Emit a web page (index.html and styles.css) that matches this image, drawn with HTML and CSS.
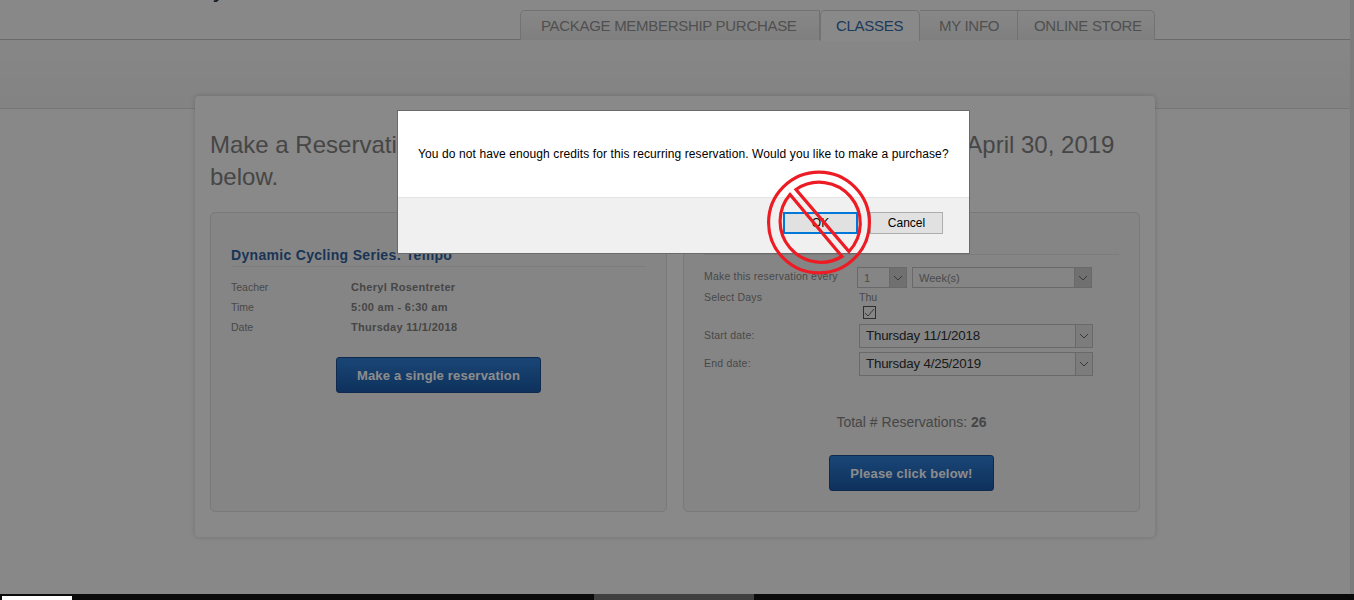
FILE: index.html
```html
<!DOCTYPE html>
<html lang="en">
<head>
  <meta charset="UTF-8" />
  <title>Make a Reservation</title>
  <link rel="stylesheet" href="styles.css">
</head>
<body>
  <div class="page">
    <div class="site-name">My Fitness Studio</div>
    <div class="tabs">
      <a class="tab tab-package">PACKAGE MEMBERSHIP PURCHASE</a>
      <a class="tab tab-classes active">CLASSES</a>
      <a class="tab tab-info">MY INFO</a>
      <a class="tab tab-store">ONLINE STORE</a>
    </div>
    <div class="subbar"></div>

    <div class="card">
      <h1>Make a Reservation for this class, or make a recurring reservation until April 30, 2019 below.</h1>
      <div class="columns">
        <div class="panel panel-single">
          <h2>Dynamic Cycling Series: Tempo</h2>
          <div class="info-row"><span class="info-label">Teacher</span><strong>Cheryl Rosentreter</strong></div>
          <div class="info-row"><span class="info-label">Time</span><strong>5:00 am - 6:30 am</strong></div>
          <div class="info-row"><span class="info-label">Date</span><strong>Thursday 11/1/2018</strong></div>
          <div class="btn-row"><button class="blue-btn single-btn">Make a single reservation</button></div>
        </div>

        <div class="panel panel-recurring">
          <h2>Make a recurring reservation</h2>
          <div class="form-row every-row">
            <span class="form-label">Make this reservation every</span>
            <div class="select small num-select"><span>1</span><i class="arrow"><svg width="10" height="6" viewBox="0 0 10 6"><path d="M1 1l4 4 4-4" /></svg></i></div>
            <div class="select small unit-select"><span>Week(s)</span><i class="arrow"><svg width="10" height="6" viewBox="0 0 10 6"><path d="M1 1l4 4 4-4" /></svg></i></div>
          </div>
          <div class="form-row days-row">
            <span class="form-label">Select Days</span>
            <div class="day">
              <span>Thu</span>
              <div class="check"><svg width="11" height="10" viewBox="0 0 11 10"><path d="M1 5l3 3 6-7" /></svg></div>
            </div>
          </div>
          <div class="form-row date-row">
            <span class="form-label">Start date:</span>
            <div class="select large"><span>Thursday 11/1/2018</span><i class="arrow"><svg width="10" height="6" viewBox="0 0 10 6"><path d="M1 1l4 4 4-4" /></svg></i></div>
          </div>
          <div class="form-row date-row">
            <span class="form-label">End date:</span>
            <div class="select large"><span>Thursday 4/25/2019</span><i class="arrow"><svg width="10" height="6" viewBox="0 0 10 6"><path d="M1 1l4 4 4-4" /></svg></i></div>
          </div>
          <p class="total">Total # Reservations: <strong>26</strong></p>
          <div class="btn-row"><button class="blue-btn click-btn">Please click below!</button></div>
        </div>
      </div>
    </div>
  </div>

  <div class="taskbar">
    <span class="task-white"></span>
    <span class="task-grey"></span>
  </div>

  <div class="overlay"></div>
  <div class="scroll-edge"></div>

  <div class="dialog">
    <div class="dialog-body">You do not have enough credits for this recurring reservation. Would you like to make a purchase?</div>
    <div class="dialog-foot">
      <button class="dlg-btn ok">OK</button>
      <button class="dlg-btn cancel">Cancel</button>
    </div>
  </div>

  <svg class="no-sign" width="106" height="106" viewBox="0 -0.5 106 106">
    <circle cx="53" cy="53" r="50.4" />
    <path d="M30 20 A41 41 0 0 1 83 82 Z" />
    <path d="M24 25 A41 41 0 0 0 76 87 Z" />
  </svg>
</body>
</html>
```

FILE: styles.css
```css
* {
  margin: 0;
  padding: 0;
  box-sizing: border-box;
}

html, body {
  height: 600px;
  overflow: hidden;
}

body {
  font-family: "Liberation Sans", Arial, sans-serif;
  background: #f8f8f8;
  color: #858585;
  position: relative;
}

.page {
  height: 594px;
  overflow: hidden;
}

.site-name {
  height: 0;
  margin-top: -24px;
  margin-left: 193px;
  font-size: 24px;
  line-height: 26px;
  color: #333;
}

.tabs {
  height: 40px;
  margin-top: 24px;
  padding: 10px 0 0 520px;
  display: flex;
  border-bottom: 1px solid #c2c2c2;
}

.tab {
  flex: none;
  height: 30px;
  font-size: 15px;
  letter-spacing: -0.3px;
  line-height: 30px;
  white-space: nowrap;
  color: #929292;
  border: 1px solid #d0d0d0;
  border-bottom: none;
  border-left: none;
  background: linear-gradient(#f6f6f6, #e8e8e8);
}

.tab-package {
  width: 300px;
  padding-left: 20px;
  border-left: 1px solid #d0d0d0;
  border-top-left-radius: 5px;
}

.tab-classes {
  width: 100px;
  padding-left: 15px;
}

.tab-info {
  width: 98px;
  padding-left: 19px;
}

.tab-store {
  width: 137px;
  padding-left: 16px;
  border-top-right-radius: 5px;
}

.tab.active {
  height: 31px;
  color: #336aa8;
  background: #f9f9f9;
  border-left: 1px solid #d0d0d0;
  border-radius: 5px 5px 0 0;
}

.subbar {
  height: 69px;
  background: linear-gradient(#f6f6f6, #eeeeee);
  border-bottom: 1px solid #d8d8d8;
}

.card {
  width: 960px;
  height: 441px;
  margin: -13px 0 0 195px;
  padding: 33px 15px 0;
  background: #f9f9f9;
  border-radius: 4px;
  box-shadow: 0 0 5px rgba(0, 0, 0, 0.18);
  position: relative;
}

h1 {
  font-size: 24px;
  font-weight: normal;
  line-height: 32px;
  color: #808080;
  margin-bottom: 19px;
}

.columns {
  display: flex;
  gap: 16px;
}

.panel {
  width: 457px;
  height: 300px;
  padding: 32px 20px 0;
  background: #f3f3f3;
  border: 1px solid #dcdcdc;
  border-radius: 5px;
}

.panel-recurring {
  padding-top: 20px;
}

h2 {
  font-size: 14px;
  line-height: 20px;
  letter-spacing: 0.31px;
  color: #2f609c;
  border-bottom: 1px solid #e2e2e2;
  padding-bottom: 1px;
  margin-bottom: 10px;
}

.panel-recurring h2 {
  margin-bottom: 12px;
}

.info-row {
  display: flex;
  height: 20px;
  font-size: 10.5px;
  line-height: 20px;
}

.info-label {
  width: 120px;
}

.info-row strong {
  color: #808080;
  font-size: 11px;
  letter-spacing: 0.3px;
}

.btn-row {
  display: flex;
  justify-content: center;
}

.blue-btn {
  font-family: inherit;
  font-size: 13px;
  font-weight: bold;
  letter-spacing: 0.2px;
  color: #fff;
  background: linear-gradient(#2f80d8, #1a5aa8);
  border: 1px solid #1c4c91;
  border-radius: 3px;
  height: 36px;
}

.single-btn {
  width: 205px;
  margin-top: 20px;
}

.click-btn {
  width: 165px;
}

.form-row {
  display: flex;
  font-size: 10.5px;
}

.form-label {
  width: 153px;
  letter-spacing: 0.2px;
}

.every-row {
  height: 23px;
  line-height: 18px;
}

.select {
  display: flex;
  justify-content: space-between;
  align-items: center;
  border: 1px solid #c0c0c0;
  background: #f3f3f3;
}

.select.small {
  height: 21px;
  font-size: 11px;
  color: #888;
  padding-left: 6px;
}

.num-select {
  width: 50px;
  margin-right: 5px;
}

.unit-select {
  width: 180px;
}

.select.large {
  width: 234px;
  height: 24px;
  font-size: 13.33px;
  letter-spacing: -0.2px;
  color: #303030;
  padding-left: 6px;
}

.arrow {
  width: 17px;
  height: 100%;
  display: flex;
  align-items: center;
  justify-content: center;
  background: #cccccc;
  border-left: 1px solid #c0c0c0;
}

.large .arrow {
  background: #e2e2e2;
}

.arrow path, .check path {
  fill: none;
  stroke: #666;
  stroke-width: 1;
}

.days-row {
  height: 34px;
  line-height: 14px;
}

.day {
  width: 18px;
  margin-left: 2px;
  display: flex;
  flex-direction: column;
  gap: 2px;
}

.check {
  width: 13px;
  height: 13px;
  margin-left: 4px;
  flex: none;
  border: 1px solid #555;
  display: flex;
  align-items: center;
  justify-content: center;
}

.date-row {
  height: 28px;
  line-height: 22px;
}

.date-row .form-label {
  width: 155px;
}

.total {
  margin-top: 33px;
  margin-bottom: 24px;
  text-align: center;
  font-size: 14px;
  line-height: 18px;
  color: #808080;
}

.taskbar {
  height: 6px;
  background: #0a0a0a;
  display: flex;
  position: relative;
}

.task-white {
  width: 70px;
  height: 4px;
  margin: 2px 0 0 2px;
  background: #fff;
}

.task-grey {
  width: 160px;
  margin-left: 522px;
  background: #404040;
}

.overlay {
  position: absolute;
  top: 0;
  left: 0;
  right: 0;
  height: 594px;
  background: rgba(0, 0, 0, 0.45);
}

.scroll-edge {
  position: absolute;
  top: 0;
  right: 0;
  width: 4px;
  height: 594px;
  background: #7c7c7c;
}

.dialog {
  position: absolute;
  top: 110px;
  left: 397px;
  width: 573px;
  height: 144px;
  background: #fff;
  border: 1px solid #6a6a6a;
  display: flex;
  flex-direction: column;
}

.dialog-body {
  height: 86px;
  padding: 35px 0 0 20px;
  font-size: 12px;
  letter-spacing: 0.1px;
  line-height: 16px;
  color: #000;
  white-space: nowrap;
}

.dialog-foot {
  flex: 1;
  background: #f0f0f0;
  border-top: 1px solid #e4e4e4;
  display: flex;
  justify-content: flex-end;
  gap: 12px;
  padding: 14px 26px 0 0;
}

.dlg-btn {
  height: 22px;
  font-family: "Liberation Sans", Arial, sans-serif;
  font-size: 12px;
  color: #000;
  background: #e1e1e1;
  border: 1px solid #adadad;
}

.ok {
  width: 75px;
  border: 2px solid #0078d7;
}

.cancel {
  width: 73px;
}

.no-sign {
  position: absolute;
  top: 169px;
  left: 766px;
}

.no-sign circle, .no-sign path {
  fill: none;
  stroke: #ed1c24;
  stroke-width: 3.2;
  stroke-miterlimit: 10;
}
```
